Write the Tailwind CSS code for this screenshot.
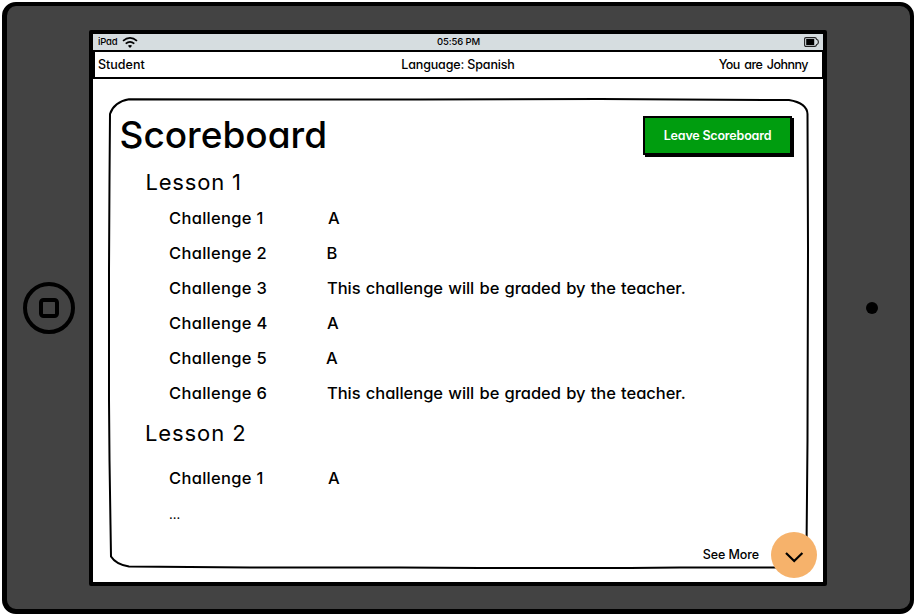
<!DOCTYPE html>
<html lang="en">
<head>
<meta charset="utf-8">
<title>Scoreboard</title>
<script src="https://cdn.jsdelivr.net/npm/@tailwindcss/browser@4"></script>
</head>
<body class="bg-white font-['Inter',sans-serif] font-[450] text-black [font-feature-settings:'cv11'] w-[916px] h-[616px] overflow-hidden pl-[2px] pt-[2px]">
<div class="w-[912px] h-[612px] bg-[#434343] border-4 border-l-5 border-b-5 border-black rounded-[14px] flex">
  <!-- Home button side -->
  <div class="w-[82px] shrink-0 flex items-center pl-4">
    <svg class="w-[52px] h-[52px]" viewBox="0 0 52 52" fill="none" stroke="#000" stroke-width="4"><circle cx="26" cy="26" r="24"/><rect x="18" y="18" width="16" height="16" rx="2.5"/></svg>
  </div>

  <!-- Screen -->
  <div class="relative w-[738px] h-[556px] mt-6 shrink-0 bg-white border-4 border-black rounded-[2px] flex flex-col">
    <div class="h-4 shrink-0 bg-[#d6dde0] grid grid-cols-3 items-center pl-[5px] pr-[4px] text-[9.5px] leading-4">
      <div class="flex items-center gap-[5px]">
        <span class="tracking-[-0.2px]">iPad</span>
        <svg class="w-4 h-[11px]" viewBox="0 0 16 11" fill="none" stroke="#000" stroke-width="1.7"><path d="M1 3.8Q8-1.9 15 3.8M3.7 6.7Q8 3.2 12.3 6.7"/><path d="M5.9 8.7Q8 7.3 10.1 8.7L8 10.9Z" fill="#000" stroke="none"/></svg>
      </div>
      <span class="text-center tracking-[-0.15px]">05:56 PM</span>
      <svg class="w-[15px] h-[10px] justify-self-end" viewBox="0 0 15 10"><path d="M2 .6H10.8Q12.2.6 12.5 2.2Q14.4 2.6 14.4 5T12.5 7.8Q12.2 9.4 10.8 9.4H2Q.6 9.4.6 8V2Q.6.6 2 .6Z" fill="none" stroke="#222" stroke-width="1.1"/><rect x="2.2" y="2" width="8" height="6" fill="#000"/></svg>
    </div>
    <header class="h-[29px] -mr-[1px] shrink-0 border-2 border-black grid grid-cols-3 items-center pl-[3px] pr-[14px] text-[12.5px] leading-[25px]">
      <span>Student</span>
      <span class="text-center tracking-[-0.15px] pl-[10px]">Language: Spanish</span>
      <span class="text-right tracking-[-0.5px] [word-spacing:1.5px]">You are Johnny</span>
    </header>

    <main class="relative flex-1">
      <svg class="absolute left-0 top-[1px] w-[730px] h-[502px]" viewBox="93 80 730 502" fill="none" stroke="#000" stroke-width="2"><path d="M129 99.3L420 99.5L600 98.9L680 99.5L789 100Q807 103 807.5 114L808 250L807.5 440L806.5 550Q804 568 785 567.5L680 567.5L630 568L480 568L400 567.5L250 567.5L129 566.5Q116 564.5 111 556.5L110.500 525L109.500 460L109 400L109 270L109.500 180L110 114Q114 102 129 99.300Z"/></svg>

      <div class="relative flex justify-between pt-[37px] pl-[26.5px] pr-[31px]">
        <h1 class="text-[37px] leading-[39px] font-medium -mt-[1px]">Scoreboard</h1>
        <button class="w-[149px] h-[39px] bg-[#009d0f] border-2 border-black shadow-[2px_2px_0_#000] text-white text-[12.5px] font-semibold leading-none tracking-[-0.2px] pt-[1px]">Leave Scoreboard</button>
      </div>

      <section class="relative pl-[52px]">
        <h2 class="text-[22px] leading-[30px] mt-[12px] tracking-[0.8px] pl-[0.5px] font-normal">Lesson 1</h2>
        <div class="grid grid-cols-[158px_1fr] auto-rows-[35px] items-center mt-[3px] pl-[24px] text-[16.5px] leading-[34px]">
          <span class="tracking-[0.3px]">Challenge 1</span><span class="pl-[1px]">A</span>
          <span class="tracking-[0.3px]">Challenge 2</span><span class="-ml-[0.5px]">B</span>
          <span class="tracking-[0.3px]">Challenge 3</span><span class="tracking-[-0.04px] [word-spacing:0.9px]">This challenge will be graded by the teacher.</span>
          <span class="tracking-[0.3px]">Challenge 4</span><span>A</span>
          <span class="tracking-[0.3px]">Challenge 5</span><span class="-ml-[1px]">A</span>
          <span class="tracking-[0.3px]">Challenge 6</span><span class="tracking-[-0.04px] [word-spacing:0.9px]">This challenge will be graded by the teacher.</span>
        </div>
        <h2 class="text-[22px] leading-[30px] mt-[8px] tracking-[0.9px] font-normal">Lesson 2</h2>
        <div class="grid grid-cols-[158px_1fr] auto-rows-[35px] items-center mt-[12px] pl-[24px] text-[16.5px] leading-[34px]">
          <span class="tracking-[0.3px]">Challenge 1</span><span class="pl-[1px]">A</span>
          <span class="text-[13px] font-normal pt-[3px]">...</span>
        </div>
      </section>

      <div class="absolute right-[6px] bottom-[4px] flex items-center gap-3">
        <span class="text-[12.5px] tracking-[-0.1px]">See More</span>
        <svg class="w-[46px] h-[46px]" viewBox="0 0 46 46"><circle cx="23" cy="23" r="23" fill="#f6b26b"/><path d="M15 21L23.200 29L31.400 21" fill="none" stroke="#000" stroke-width="2.200"/></svg>
      </div>
    </main>
  </div>

  <!-- Camera side -->
  <div class="flex-1 flex items-center pl-[39px]"><span class="w-3 h-3 rounded-full bg-black"></span></div>
</div>
</body>
</html>
